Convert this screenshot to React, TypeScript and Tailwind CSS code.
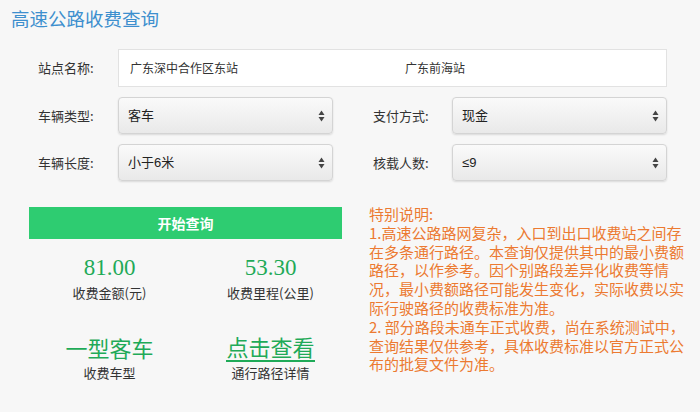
import React from 'react'

const cjk = '"Noto Sans CJK SC", "Noto Sans", sans-serif'
const serif = '"Liberation Serif", "Noto Sans CJK SC", serif'
const sans = '"Liberation Sans", "Noto Sans CJK SC", sans-serif'

function Arrows() {
  return (
    <svg width="7" height="12" viewBox="0 0 7 12" className="absolute right-[7px] top-1/2 -translate-y-1/2">
      <path d="M3.5 0.5 L6.5 5 L0.5 5 Z" fill="#444" />
      <path d="M3.5 11.5 L6.5 7 L0.5 7 Z" fill="#444" />
    </svg>
  )
}

function Select({ value }: { value: string }) {
  return (
    <div
      className="relative w-[215px] h-[37px] rounded-[4px] border border-[#d4d4d4] bg-gradient-to-b from-[#fafafa] to-[#e9e9e9] shadow-[0_1px_2px_rgba(0,0,0,0.12)] flex items-center pl-[9px] text-[13px] text-[#222]"
      style={{ fontFamily: sans }}
    >
      {value}
      <Arrows />
    </div>
  )
}

function Row({ label, value, label2, value2 }: { label: string; value: string; label2: string; value2: string }) {
  return (
    <div className="flex items-center">
      <div className="w-[80px] text-[13px] text-[#333]">{label}</div>
      <Select value={value} />
      <div className="w-[79px] ml-[40px] text-[13px] text-[#333]">{label2}</div>
      <Select value={value2} />
    </div>
  )
}

const notes = [
  '特别说明:',
  '1.高速公路路网复杂，入口到出口收费站之间存',
  '在多条通行路径。本查询仅提供其中的最小费额',
  '路径，以作参考。因个别路段差异化收费等情',
  '况，最小费额路径可能发生变化，实际收费以实',
  '际行驶路径的收费标准为准。',
  '2. 部分路段未通车正式收费，尚在系统测试中，',
  '查询结果仅供参考，具体收费标准以官方正式公',
  '布的批复文件为准。',
]

export default function App() {
  return (
    <div className="w-[700px] h-[412px] overflow-hidden bg-[#f7f7f7]" style={{ fontFamily: cjk }}>
      <h1 className="pl-[11px] pt-[6px] text-[18.5px] leading-[24px] text-[#3d8fce]">高速公路收费查询</h1>

      <div className="pl-[38px] pt-[19px] flex flex-col gap-[10px]">
        <div className="flex items-center">
          <div className="w-[80px] text-[13px] text-[#333]">站点名称:</div>
          <div className="w-[549px] h-[38px] bg-white border border-[#e2e2e2] flex items-center text-[12px] text-[#333]">
            <span className="w-[286px] pl-[11px]">广东深中合作区东站</span>
            <span>广东前海站</span>
          </div>
        </div>
        <Row label="车辆类型:" value="客车" label2="支付方式:" value2="现金" />
        <Row label="车辆长度:" value="小于6米" label2="核载人数:" value2="≤9" />
      </div>

      <div className="flex pl-[29px] pt-[26px]">
        <div className="w-[322px]">
          <div className="w-[313px] h-[32px] bg-[#2ecc71] flex items-center justify-center text-white text-[14px] font-bold">
            开始查询
          </div>
          <div className="grid grid-cols-2 pt-[16px]">
            <div className="flex flex-col items-center">
              <div className="text-[23px] leading-[26px] text-[#1faa58]" style={{ fontFamily: serif }}>81.00</div>
              <div className="text-[13px] leading-[18px] mt-[3px] text-[#333]">收费金额(元)</div>
            </div>
            <div className="flex flex-col items-center">
              <div className="text-[23px] leading-[26px] text-[#1faa58]" style={{ fontFamily: serif }}>53.30</div>
              <div className="text-[13px] leading-[18px] mt-[3px] text-[#333]">收费里程(公里)</div>
            </div>
            <div className="flex flex-col items-center pt-[31px]">
              <div className="text-[22px] leading-[28px] text-[#1faa58]">一型客车</div>
              <div className="text-[13px] leading-[18px] mt-[3px] text-[#333]">收费车型</div>
            </div>
            <div className="flex flex-col items-center pt-[31px]">
              <div className="text-[22px] leading-[27px] text-[#1faa58] border-b-2 border-[#1faa58]">点击查看</div>
              <div className="text-[13px] leading-[18px] mt-[2px] text-[#333]">通行路径详情</div>
            </div>
          </div>
        </div>
        <div className="ml-[18px] -mt-[2px] text-[15px] leading-[18.8px] text-[#ec7a31] whitespace-nowrap">
          {notes.map((n) => (
            <div key={n}>{n}</div>
          ))}
        </div>
      </div>
    </div>
  )
}
